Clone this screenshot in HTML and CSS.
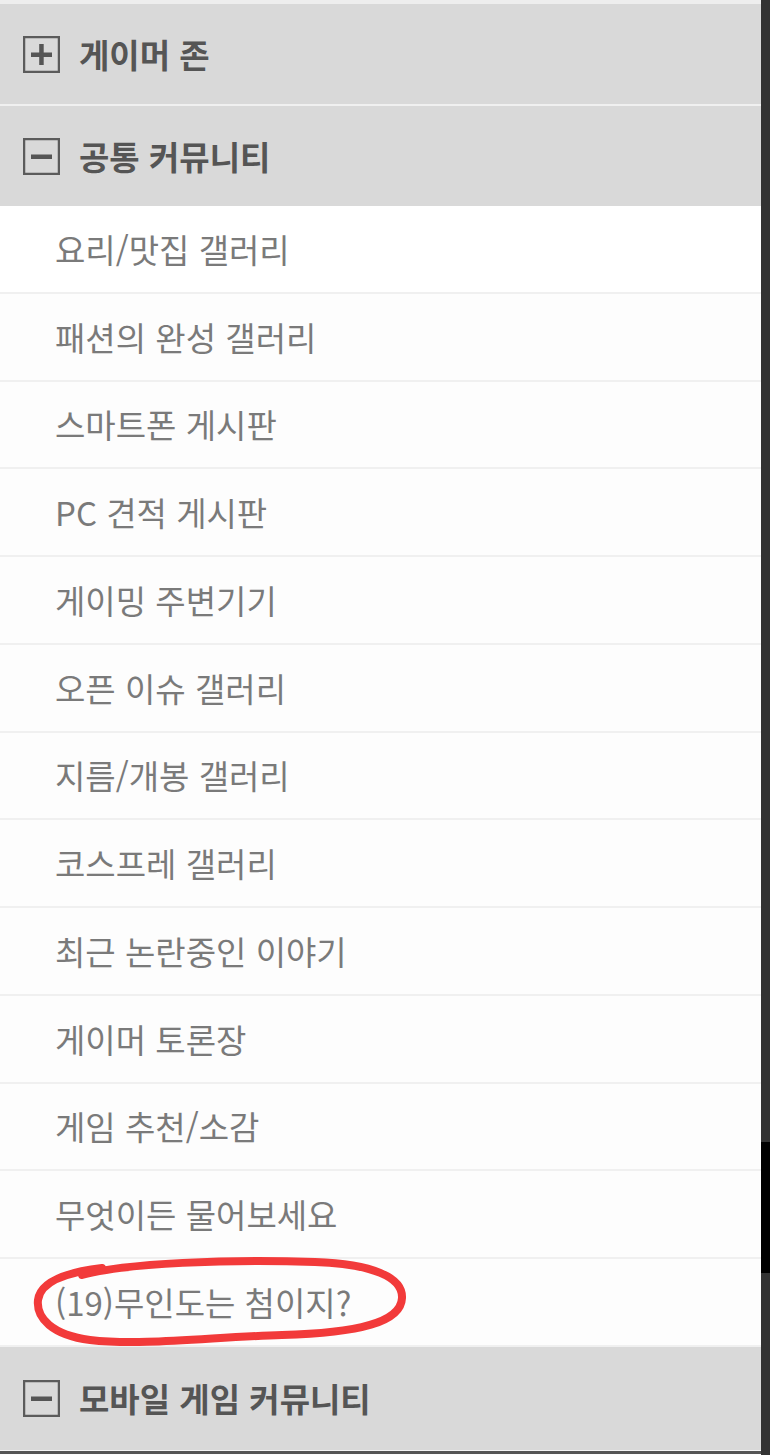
FILE: index.html
```html
<!DOCTYPE html>
<html lang="ko">

<head>
    <meta charset="UTF-8">
    <meta name="viewport" content="width=device-width, initial-scale=1.0">
    <title>커뮤니티 메뉴</title>
    <link rel="stylesheet" href="styles.css">
</head>

<body>
    <div class="screen">
        <!-- Side menu -->
        <nav class="menu">
            <div class="top-edge"></div>

            <div class="group-head">
                <svg class="toggle" viewBox="0 0 37 37" width="37" height="37">
                    <rect x="1" y="1" width="35" height="35" fill="none" stroke="#5b5b5b" stroke-width="2.5" />
                    <rect x="8" y="16.5" width="21" height="4.5" fill="#555" />
                    <rect x="16.2" y="8" width="4.5" height="21" fill="#555" />
                </svg>
                <span>게이머 존</span>
            </div>

            <div class="group-head">
                <svg class="toggle" viewBox="0 0 37 37" width="37" height="37">
                    <rect x="1" y="1" width="35" height="35" fill="none" stroke="#5b5b5b" stroke-width="2.5" />
                    <rect x="8" y="16.5" width="21" height="4.5" fill="#555" />
                </svg>
                <span>공통 커뮤니티</span>
            </div>

            <ul class="board-list">
                <li>요리/맛집 갤러리</li>
                <li>패션의 완성 갤러리</li>
                <li>스마트폰 게시판</li>
                <li>PC 견적 게시판</li>
                <li>게이밍 주변기기</li>
                <li>오픈 이슈 갤러리</li>
                <li>지름/개봉 갤러리</li>
                <li>코스프레 갤러리</li>
                <li>최근 논란중인 이야기</li>
                <li>게이머 토론장</li>
                <li>게임 추천/소감</li>
                <li>무엇이든 물어보세요</li>
                <li class="marked">
                    <span>(19)무인도는 첨이지?</span>
                    <!-- hand-drawn highlight -->
                    <svg class="scribble" viewBox="0 0 380 100" width="380" height="100">
                        <path d="M52 22 C95 10 200 6 285 9 C342 11 373 24 372 45 C371 69 330 80 252 82 C182 84 112 93 60 87 C22 82 6 65 8 47 C10 31 30 20 72 15"
                              fill="none" stroke="#f23a3a" stroke-width="8" stroke-linecap="round" stroke-linejoin="round" />
                    </svg>
                </li>
            </ul>

            <div class="group-head last">
                <svg class="toggle" viewBox="0 0 37 37" width="37" height="37">
                    <rect x="1" y="1" width="35" height="35" fill="none" stroke="#5b5b5b" stroke-width="2.5" />
                    <rect x="8" y="16.5" width="21" height="4.5" fill="#555" />
                </svg>
                <span>모바일 게임 커뮤니티</span>
            </div>
            <div class="bottom-edge"></div>
        </nav>

        <!-- Page behind the menu -->
        <div class="side-strip">
            <div class="strip-block"></div>
        </div>
    </div>
</body>

</html>
```

FILE: styles.css
```css
body {
    margin: 0;
    padding: 0;
    background-color: #000;
    font-family: "Noto Sans CJK KR", "Noto Sans", sans-serif;
}

.screen {
    display: flex;
    height: 1455px;
    overflow: hidden;
}

.menu {
    width: 761px;
    display: flex;
    flex-direction: column;
    background-color: #fdfdfd;
}

.top-edge {
    height: 4px;
    background-color: #eeeeee;
}

.group-head {
    height: 100px;
    display: flex;
    align-items: center;
    gap: 19px;
    padding-left: 23px;
    background-color: #d9d9d9;
    color: #555;
    font-size: 33px;
    font-weight: bold;
}

.group-head + .group-head {
    border-top: 2px solid #f0f0f0;
}

.group-head.last {
    height: 103px;
    border-bottom: 1px solid #f4f4f4;
}

.toggle {
    flex-shrink: 0;
}

.board-list {
    list-style: none;
    margin: 0;
    padding: 0;
}

.board-list li {
    height: 85.75px;
    display: flex;
    align-items: center;
    padding-left: 55px;
    border-bottom: 2px solid #f0f0f0;
    color: #7a7a7a;
    font-size: 33px;
}

.board-list li:first-child {
    background-color: #fff;
}

.marked {
    position: relative;
}

.scribble {
    position: absolute;
    left: 30px;
    top: -6px;
}

.bottom-edge {
    height: 3px;
    background-color: #555;
}

.side-strip {
    flex: 1;
    background-color: #333;
    padding-top: 1142px;
}

.strip-block {
    height: 131px;
    background-color: #000;
}
```
